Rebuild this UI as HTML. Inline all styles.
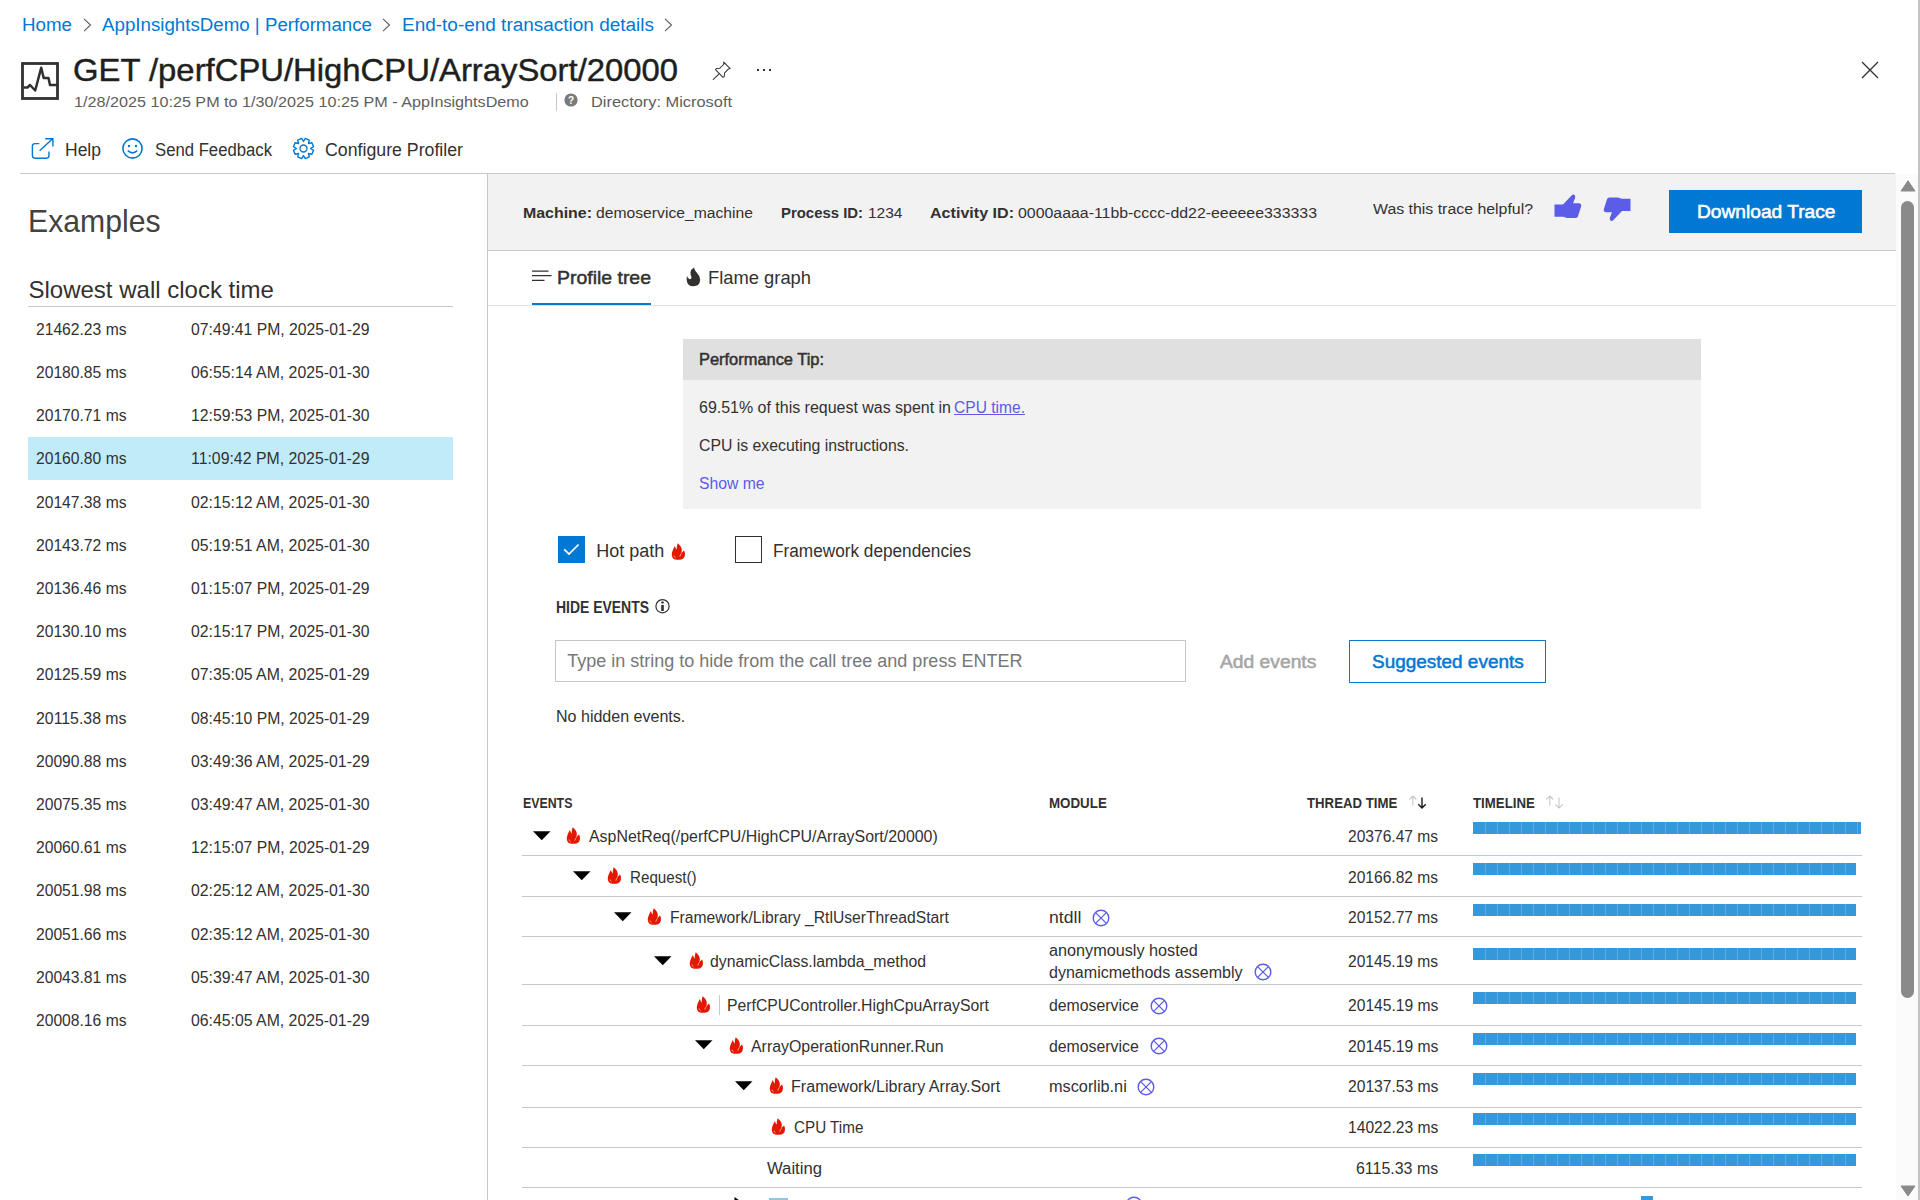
<!DOCTYPE html>
<html><head><meta charset="utf-8"><style>
html,body{margin:0;padding:0;width:1920px;height:1200px;overflow:hidden;background:#fff;}
body{position:relative;font-family:"Liberation Sans", sans-serif;}
.t{position:absolute;white-space:nowrap;transform-origin:0 50%;}
.a{position:absolute;}
</style></head><body>
<div class="a" style="left:1918px;top:0;width:2px;height:1200px;background:#c4c4c4"></div>
<svg class="a" style="left:83px;top:18px" width="9" height="14" viewBox="0 0 9 14"><polyline points="1,0.8 7.5,7 1,13.2" fill="none" stroke="#605e5c" stroke-width="1.1"/></svg>
<svg class="a" style="left:381.5px;top:18px" width="9" height="14" viewBox="0 0 9 14"><polyline points="1,0.8 7.5,7 1,13.2" fill="none" stroke="#605e5c" stroke-width="1.1"/></svg>
<svg class="a" style="left:664px;top:18px" width="9" height="14" viewBox="0 0 9 14"><polyline points="1,0.8 7.5,7 1,13.2" fill="none" stroke="#605e5c" stroke-width="1.1"/></svg>
<svg class="a" style="left:20px;top:61px" width="40" height="40" viewBox="0 0 40 40"><rect x="2.5" y="2.5" width="35" height="35" fill="none" stroke="#323130" stroke-width="2.8"/><polyline points="3.5,26.5 7.5,26.5 10,24 15.2,29.5 21.2,6.8 23.7,17 28.5,17 30,24 37,24" fill="none" stroke="#323130" stroke-width="2.5" stroke-linejoin="round"/></svg>
<svg class="a" style="left:711.5px;top:60.5px" width="19.5" height="19.5" viewBox="0 0 21 21"><path d="M12.6,1.2 L19.6,8.2 L17.8,8.6 L13.6,12.8 L13.2,16.6 L11.9,17.6 L3.7,9.4 L4.7,8.1 L8.5,7.7 L12.7,3.5 Z" fill="none" stroke="#323130" stroke-width="1.1" stroke-linejoin="round"/><line x1="7.8" y1="13.5" x2="1" y2="20.3" stroke="#323130" stroke-width="1.1"/></svg>
<div class="a" style="left:757.3px;top:69px;width:2.2px;height:2.2px;background:#323130"></div>
<div class="a" style="left:763px;top:69px;width:2.2px;height:2.2px;background:#323130"></div>
<div class="a" style="left:768.8px;top:69px;width:2.2px;height:2.2px;background:#323130"></div>
<div class="a" style="left:556px;top:92.5px;width:1px;height:18px;background:#c8c6c4"></div>
<svg class="a" style="left:563.5px;top:93.3px" width="14" height="14" viewBox="0 0 14 14"><circle cx="7" cy="7" r="6.6" fill="#7a7a7a"/><text x="7" y="10.6" text-anchor="middle" font-family="Liberation Sans" font-weight="700" font-size="10" fill="#fff">?</text></svg>
<svg class="a" style="left:1861px;top:61px" width="18" height="18" viewBox="0 0 18 18"><path d="M1,1 L17,17 M17,1 L1,17" stroke="#323130" stroke-width="1.3"/></svg>
<svg class="a" style="left:31px;top:137px" width="24" height="23" viewBox="0 0 24 23"><path d="M8.3,6.6 L4,6.6 Q1.4,6.6 1.4,9.2 L1.4,18.6 Q1.4,21.2 4,21.2 L15.4,21.2 Q18,21.2 18,18.6 L18,14.6" fill="none" stroke="#0078d4" stroke-width="1.4"/><path d="M8.6,13.8 L21.6,1.8 M14.2,1.8 L21.9,1.8 L21.9,9.4" fill="none" stroke="#0078d4" stroke-width="1.4"/></svg>
<svg class="a" style="left:121px;top:137px" width="23" height="23" viewBox="0 0 23 23"><circle cx="11.5" cy="11.5" r="9.6" fill="none" stroke="#0078d4" stroke-width="1.6"/><circle cx="8" cy="9" r="1.2" fill="#0078d4"/><circle cx="15" cy="9" r="1.2" fill="#0078d4"/><path d="M6.8,13.6 Q11.5,18 16.2,13.6" fill="none" stroke="#0078d4" stroke-width="1.6"/></svg>
<svg class="a" style="left:292.1px;top:137px" width="23" height="23" viewBox="0 0 22.5 22.5"><polygon points="21.08,13.07 19.49,16.92 16.13,16.13 16.92,19.49 13.07,21.08 11.25,18.15 9.43,21.08 5.58,19.49 6.37,16.13 3.01,16.92 1.42,13.07 4.35,11.25 1.42,9.43 3.01,5.58 6.37,6.37 5.58,3.01 9.43,1.42 11.25,4.35 13.07,1.42 16.92,3.01 16.13,6.37 19.49,5.58 21.08,9.43 18.15,11.25" fill="none" stroke="#0078d4" stroke-width="1.35" stroke-linejoin="round"/><circle cx="11.25" cy="11.25" r="3.4" fill="none" stroke="#0078d4" stroke-width="1.35"/></svg>
<div class="a" style="left:20px;top:173px;width:1875px;height:1px;background:#c8c8c8"></div>
<div class="a" style="left:487px;top:173px;width:1px;height:1027px;background:#c8c8c8"></div>
<div class="a" style="left:28px;top:306px;width:425px;height:1px;background:#c8c8c8"></div>
<div class="a" style="left:28px;top:437px;width:425px;height:43px;background:#c0ecfa"></div>
<div class="a" style="left:488px;top:174px;width:1408px;height:76px;background:#f2f2f2"></div>
<div class="a" style="left:488px;top:250px;width:1408px;height:1px;background:#c8c8c8"></div>
<svg class="a" style="left:1554px;top:193.5px" width="28" height="25" viewBox="0 0 28 25"><path d="M0.5,10.5 L9,10.5 L17.8,1.2 Q19.3,-0.3 20.8,1.3 Q21.6,2.5 21,4.2 L19,9.3 L25.3,9.3 Q27.6,9.6 27.2,12.2 L24,22.3 Q23.4,23.9 21.6,23.9 L13,23.9 L9.3,22.8 L0.5,22.8 Z" fill="#5b5ce8"/></svg>
<svg class="a" style="left:1603px;top:197px" width="28" height="25" viewBox="0 0 28 25"><path d="M0.5,10.5 L9,10.5 L17.8,1.2 Q19.3,-0.3 20.8,1.3 Q21.6,2.5 21,4.2 L19,9.3 L25.3,9.3 Q27.6,9.6 27.2,12.2 L24,22.3 Q23.4,23.9 21.6,23.9 L13,23.9 L9.3,22.8 L0.5,22.8 Z" fill="#5b5ce8" transform="rotate(180 14 12.25)"/></svg>
<div class="a" style="left:1669px;top:190px;width:193px;height:43px;background:#0078d4"></div>
<svg class="a" style="left:532px;top:269px" width="20" height="14" viewBox="0 0 20 14"><path d="M0,2.1 H16.5 M0,6.7 H19.5 M0,11.3 H12.5" stroke="#323130" stroke-width="1.3"/></svg>
<svg class="a" style="left:686px;top:266.5px" width="15" height="20" viewBox="0 0 15 20"><path d="M8,0.5 Q5,2 4.5,5.5 Q4.3,8 5.5,10 Q5.5,12.3 3.8,12.3 Q2,12.3 1,9 Q0.5,10.5 0.7,13 Q1.3,19.3 7.3,19.3 Q13.8,19.3 14.2,12.8 Q14.2,9 11,6 Q8.3,3.5 8,0.5 Z" fill="#323130"/></svg>
<div class="a" style="left:532px;top:303px;width:119px;height:2px;background:#0078d4"></div>
<div class="a" style="left:488px;top:305px;width:1408px;height:1px;background:#e1e1e1"></div>
<div class="a" style="left:683px;top:339px;width:1018px;height:41px;background:#e0e0e0"></div>
<div class="a" style="left:683px;top:380px;width:1018px;height:129px;background:#f2f2f2"></div>
<svg class="a" style="left:558px;top:536px" width="27" height="27" viewBox="0 0 27 27"><rect width="27" height="27" fill="#0078d4"/><polyline points="6.2,13.3 11,18 20.6,8.5" fill="none" stroke="#fff" stroke-width="1.7"/></svg>
<div class="a" style="left:735px;top:536px;width:25px;height:25px;border:1px solid #323130"></div>
<svg class="a" style="left:671px;top:542.5px" width="16" height="18" viewBox="0 0 16 18"><g transform="translate(-0.3,-0.4)"><path d="M7,17.2 C4.5,17.2 2.8,16.6 1.8,14.8 C0.8,13 0.9,10.5 1.8,8.3 C2.4,6.6 3.4,5 4.2,3.5 C4.6,4.8 5,5.8 5.9,7.2 C5.9,4.8 6.3,2.6 7,0.7 C8.8,2.2 10.6,4 11,6.4 C11.3,8 11,9.2 10.6,10.3 C11.6,9.6 12.6,8.8 13.3,7.9 C14.3,9.6 14.6,11.8 14,13.6 C13.3,15.8 11.5,17.2 9,17.2 Z" fill="#e31800"/><path d="M3.2,12.9 Q3.7,14.5 5,15.4" stroke="#f2a196" stroke-width="1" fill="none"/><path d="M9.2,14 Q9.3,12 10.9,10.6" stroke="#f2a196" stroke-width="1" fill="none"/></g></svg>
<svg class="a" style="left:655px;top:599px" width="15" height="15" viewBox="0 0 15 15"><circle cx="7.5" cy="7.2" r="6.6" fill="none" stroke="#323130" stroke-width="1.2"/><rect x="6.1" y="2.4" width="2.8" height="2.2" rx="1" fill="#323130"/><rect x="6.2" y="5.9" width="2.6" height="6.1" fill="#323130"/></svg>
<div class="a" style="left:555px;top:640px;width:629px;height:40px;border:1px solid #c6c6c6;background:#fff"></div>
<div class="a" style="left:1349px;top:640px;width:195px;height:41px;border:1px solid #0078d4"></div>
<svg class="a" style="left:1408px;top:795px" width="20" height="15" viewBox="0 0 20 15"><path d="M4.8,10.5 V1 M1.3,4.5 L4.8,1 L8.3,4.5" fill="none" stroke="#c8c8c8" stroke-width="1.1"/><path d="M14,2.5 V13 M10.3,9.3 L14,13 L17.7,9.3" fill="none" stroke="#1b1a19" stroke-width="1.4"/></svg>
<svg class="a" style="left:1545px;top:795px" width="20" height="15" viewBox="0 0 20 15"><path d="M4.8,10.5 V1 M1.3,4.5 L4.8,1 L8.3,4.5" fill="none" stroke="#c8c8c8" stroke-width="1.1"/><path d="M14,2.5 V13 M10.3,9.3 L14,13 L17.7,9.3" fill="none" stroke="#c8c8c8" stroke-width="1.1"/></svg>
<svg class="a" style="left:533.3px;top:830.6px" width="18" height="10" viewBox="0 0 18 10"><polygon points="0,0.3 17.5,0.3 8.75,9.3" fill="#000"/></svg>
<svg class="a" style="left:565.7px;top:826.6999999999999px" width="16" height="18" viewBox="0 0 16 18"><g transform="translate(-0.3,-0.4)"><path d="M7,17.2 C4.5,17.2 2.8,16.6 1.8,14.8 C0.8,13 0.9,10.5 1.8,8.3 C2.4,6.6 3.4,5 4.2,3.5 C4.6,4.8 5,5.8 5.9,7.2 C5.9,4.8 6.3,2.6 7,0.7 C8.8,2.2 10.6,4 11,6.4 C11.3,8 11,9.2 10.6,10.3 C11.6,9.6 12.6,8.8 13.3,7.9 C14.3,9.6 14.6,11.8 14,13.6 C13.3,15.8 11.5,17.2 9,17.2 Z" fill="#e31800"/><path d="M3.2,12.9 Q3.7,14.5 5,15.4" stroke="#f2a196" stroke-width="1" fill="none"/><path d="M9.2,14 Q9.3,12 10.9,10.6" stroke="#f2a196" stroke-width="1" fill="none"/></g></svg>
<div class="a" style="left:1473px;top:821.6px;width:387.8px;height:12px;background:#3498db;background-image:repeating-linear-gradient(90deg,#3498db 0,#3498db 11px,#5eace4 11px,#5eace4 12px);background-position:1px 0"></div>
<div class="a" style="left:522px;top:855.4px;width:1340px;height:1px;background:#c8c8c8"></div>
<svg class="a" style="left:573.3px;top:871.3px" width="18" height="10" viewBox="0 0 18 10"><polygon points="0,0.3 17.5,0.3 8.75,9.3" fill="#000"/></svg>
<svg class="a" style="left:607px;top:867.4px" width="16" height="18" viewBox="0 0 16 18"><g transform="translate(-0.3,-0.4)"><path d="M7,17.2 C4.5,17.2 2.8,16.6 1.8,14.8 C0.8,13 0.9,10.5 1.8,8.3 C2.4,6.6 3.4,5 4.2,3.5 C4.6,4.8 5,5.8 5.9,7.2 C5.9,4.8 6.3,2.6 7,0.7 C8.8,2.2 10.6,4 11,6.4 C11.3,8 11,9.2 10.6,10.3 C11.6,9.6 12.6,8.8 13.3,7.9 C14.3,9.6 14.6,11.8 14,13.6 C13.3,15.8 11.5,17.2 9,17.2 Z" fill="#e31800"/><path d="M3.2,12.9 Q3.7,14.5 5,15.4" stroke="#f2a196" stroke-width="1" fill="none"/><path d="M9.2,14 Q9.3,12 10.9,10.6" stroke="#f2a196" stroke-width="1" fill="none"/></g></svg>
<div class="a" style="left:1473px;top:862.8px;width:383.2px;height:12px;background:#3498db;background-image:repeating-linear-gradient(90deg,#3498db 0,#3498db 11px,#5eace4 11px,#5eace4 12px);background-position:1px 0"></div>
<div class="a" style="left:522px;top:896.1px;width:1340px;height:1px;background:#c8c8c8"></div>
<svg class="a" style="left:614px;top:911.6px" width="18" height="10" viewBox="0 0 18 10"><polygon points="0,0.3 17.5,0.3 8.75,9.3" fill="#000"/></svg>
<svg class="a" style="left:647px;top:907.6999999999999px" width="16" height="18" viewBox="0 0 16 18"><g transform="translate(-0.3,-0.4)"><path d="M7,17.2 C4.5,17.2 2.8,16.6 1.8,14.8 C0.8,13 0.9,10.5 1.8,8.3 C2.4,6.6 3.4,5 4.2,3.5 C4.6,4.8 5,5.8 5.9,7.2 C5.9,4.8 6.3,2.6 7,0.7 C8.8,2.2 10.6,4 11,6.4 C11.3,8 11,9.2 10.6,10.3 C11.6,9.6 12.6,8.8 13.3,7.9 C14.3,9.6 14.6,11.8 14,13.6 C13.3,15.8 11.5,17.2 9,17.2 Z" fill="#e31800"/><path d="M3.2,12.9 Q3.7,14.5 5,15.4" stroke="#f2a196" stroke-width="1" fill="none"/><path d="M9.2,14 Q9.3,12 10.9,10.6" stroke="#f2a196" stroke-width="1" fill="none"/></g></svg>
<svg class="a" style="left:1092.4px;top:908.6px" width="18" height="18" viewBox="0 0 18 18"><circle cx="9" cy="9" r="7.8" fill="none" stroke="#5b5ce8" stroke-width="1.4"/><path d="M3.6,3.6 L14.4,14.4 M14.4,3.6 L3.6,14.4" stroke="#5b5ce8" stroke-width="1.3"/></svg>
<div class="a" style="left:1473px;top:904.0px;width:383.2px;height:12px;background:#3498db;background-image:repeating-linear-gradient(90deg,#3498db 0,#3498db 11px,#5eace4 11px,#5eace4 12px);background-position:1px 0"></div>
<div class="a" style="left:522px;top:936.1px;width:1340px;height:1px;background:#c8c8c8"></div>
<svg class="a" style="left:654px;top:955.7px" width="18" height="10" viewBox="0 0 18 10"><polygon points="0,0.3 17.5,0.3 8.75,9.3" fill="#000"/></svg>
<svg class="a" style="left:688.6px;top:951.8px" width="16" height="18" viewBox="0 0 16 18"><g transform="translate(-0.3,-0.4)"><path d="M7,17.2 C4.5,17.2 2.8,16.6 1.8,14.8 C0.8,13 0.9,10.5 1.8,8.3 C2.4,6.6 3.4,5 4.2,3.5 C4.6,4.8 5,5.8 5.9,7.2 C5.9,4.8 6.3,2.6 7,0.7 C8.8,2.2 10.6,4 11,6.4 C11.3,8 11,9.2 10.6,10.3 C11.6,9.6 12.6,8.8 13.3,7.9 C14.3,9.6 14.6,11.8 14,13.6 C13.3,15.8 11.5,17.2 9,17.2 Z" fill="#e31800"/><path d="M3.2,12.9 Q3.7,14.5 5,15.4" stroke="#f2a196" stroke-width="1" fill="none"/><path d="M9.2,14 Q9.3,12 10.9,10.6" stroke="#f2a196" stroke-width="1" fill="none"/></g></svg>
<svg class="a" style="left:1253.6px;top:962.5px" width="18" height="18" viewBox="0 0 18 18"><circle cx="9" cy="9" r="7.8" fill="none" stroke="#5b5ce8" stroke-width="1.4"/><path d="M3.6,3.6 L14.4,14.4 M14.4,3.6 L3.6,14.4" stroke="#5b5ce8" stroke-width="1.3"/></svg>
<div class="a" style="left:1473px;top:948.0px;width:383.2px;height:12px;background:#3498db;background-image:repeating-linear-gradient(90deg,#3498db 0,#3498db 11px,#5eace4 11px,#5eace4 12px);background-position:1px 0"></div>
<div class="a" style="left:522px;top:984.4px;width:1340px;height:1px;background:#c8c8c8"></div>
<svg class="a" style="left:696.2px;top:995.8px" width="16" height="18" viewBox="0 0 16 18"><g transform="translate(-0.3,-0.4)"><path d="M7,17.2 C4.5,17.2 2.8,16.6 1.8,14.8 C0.8,13 0.9,10.5 1.8,8.3 C2.4,6.6 3.4,5 4.2,3.5 C4.6,4.8 5,5.8 5.9,7.2 C5.9,4.8 6.3,2.6 7,0.7 C8.8,2.2 10.6,4 11,6.4 C11.3,8 11,9.2 10.6,10.3 C11.6,9.6 12.6,8.8 13.3,7.9 C14.3,9.6 14.6,11.8 14,13.6 C13.3,15.8 11.5,17.2 9,17.2 Z" fill="#e31800"/><path d="M3.2,12.9 Q3.7,14.5 5,15.4" stroke="#f2a196" stroke-width="1" fill="none"/><path d="M9.2,14 Q9.3,12 10.9,10.6" stroke="#f2a196" stroke-width="1" fill="none"/></g></svg>
<svg class="a" style="left:1150px;top:996.7px" width="18" height="18" viewBox="0 0 18 18"><circle cx="9" cy="9" r="7.8" fill="none" stroke="#5b5ce8" stroke-width="1.4"/><path d="M3.6,3.6 L14.4,14.4 M14.4,3.6 L3.6,14.4" stroke="#5b5ce8" stroke-width="1.3"/></svg>
<div class="a" style="left:1473px;top:992.4px;width:383.2px;height:12px;background:#3498db;background-image:repeating-linear-gradient(90deg,#3498db 0,#3498db 11px,#5eace4 11px,#5eace4 12px);background-position:1px 0"></div>
<div class="a" style="left:522px;top:1025.0px;width:1340px;height:1px;background:#c8c8c8"></div>
<svg class="a" style="left:695px;top:1040.4px" width="18" height="10" viewBox="0 0 18 10"><polygon points="0,0.3 17.5,0.3 8.75,9.3" fill="#000"/></svg>
<svg class="a" style="left:728.8px;top:1036.5px" width="16" height="18" viewBox="0 0 16 18"><g transform="translate(-0.3,-0.4)"><path d="M7,17.2 C4.5,17.2 2.8,16.6 1.8,14.8 C0.8,13 0.9,10.5 1.8,8.3 C2.4,6.6 3.4,5 4.2,3.5 C4.6,4.8 5,5.8 5.9,7.2 C5.9,4.8 6.3,2.6 7,0.7 C8.8,2.2 10.6,4 11,6.4 C11.3,8 11,9.2 10.6,10.3 C11.6,9.6 12.6,8.8 13.3,7.9 C14.3,9.6 14.6,11.8 14,13.6 C13.3,15.8 11.5,17.2 9,17.2 Z" fill="#e31800"/><path d="M3.2,12.9 Q3.7,14.5 5,15.4" stroke="#f2a196" stroke-width="1" fill="none"/><path d="M9.2,14 Q9.3,12 10.9,10.6" stroke="#f2a196" stroke-width="1" fill="none"/></g></svg>
<svg class="a" style="left:1150px;top:1037.4px" width="18" height="18" viewBox="0 0 18 18"><circle cx="9" cy="9" r="7.8" fill="none" stroke="#5b5ce8" stroke-width="1.4"/><path d="M3.6,3.6 L14.4,14.4 M14.4,3.6 L3.6,14.4" stroke="#5b5ce8" stroke-width="1.3"/></svg>
<div class="a" style="left:1473px;top:1032.6px;width:383.2px;height:12px;background:#3498db;background-image:repeating-linear-gradient(90deg,#3498db 0,#3498db 11px,#5eace4 11px,#5eace4 12px);background-position:1px 0"></div>
<div class="a" style="left:522px;top:1065.2px;width:1340px;height:1px;background:#c8c8c8"></div>
<svg class="a" style="left:735px;top:1080.7px" width="18" height="10" viewBox="0 0 18 10"><polygon points="0,0.3 17.5,0.3 8.75,9.3" fill="#000"/></svg>
<svg class="a" style="left:769.3px;top:1076.8px" width="16" height="18" viewBox="0 0 16 18"><g transform="translate(-0.3,-0.4)"><path d="M7,17.2 C4.5,17.2 2.8,16.6 1.8,14.8 C0.8,13 0.9,10.5 1.8,8.3 C2.4,6.6 3.4,5 4.2,3.5 C4.6,4.8 5,5.8 5.9,7.2 C5.9,4.8 6.3,2.6 7,0.7 C8.8,2.2 10.6,4 11,6.4 C11.3,8 11,9.2 10.6,10.3 C11.6,9.6 12.6,8.8 13.3,7.9 C14.3,9.6 14.6,11.8 14,13.6 C13.3,15.8 11.5,17.2 9,17.2 Z" fill="#e31800"/><path d="M3.2,12.9 Q3.7,14.5 5,15.4" stroke="#f2a196" stroke-width="1" fill="none"/><path d="M9.2,14 Q9.3,12 10.9,10.6" stroke="#f2a196" stroke-width="1" fill="none"/></g></svg>
<svg class="a" style="left:1137px;top:1077.7px" width="18" height="18" viewBox="0 0 18 18"><circle cx="9" cy="9" r="7.8" fill="none" stroke="#5b5ce8" stroke-width="1.4"/><path d="M3.6,3.6 L14.4,14.4 M14.4,3.6 L3.6,14.4" stroke="#5b5ce8" stroke-width="1.3"/></svg>
<div class="a" style="left:1473px;top:1073.0px;width:383.2px;height:12px;background:#3498db;background-image:repeating-linear-gradient(90deg,#3498db 0,#3498db 11px,#5eace4 11px,#5eace4 12px);background-position:1px 0"></div>
<div class="a" style="left:522px;top:1106.5px;width:1340px;height:1px;background:#c8c8c8"></div>
<svg class="a" style="left:771px;top:1117.5px" width="16" height="18" viewBox="0 0 16 18"><g transform="translate(-0.3,-0.4)"><path d="M7,17.2 C4.5,17.2 2.8,16.6 1.8,14.8 C0.8,13 0.9,10.5 1.8,8.3 C2.4,6.6 3.4,5 4.2,3.5 C4.6,4.8 5,5.8 5.9,7.2 C5.9,4.8 6.3,2.6 7,0.7 C8.8,2.2 10.6,4 11,6.4 C11.3,8 11,9.2 10.6,10.3 C11.6,9.6 12.6,8.8 13.3,7.9 C14.3,9.6 14.6,11.8 14,13.6 C13.3,15.8 11.5,17.2 9,17.2 Z" fill="#e31800"/><path d="M3.2,12.9 Q3.7,14.5 5,15.4" stroke="#f2a196" stroke-width="1" fill="none"/><path d="M9.2,14 Q9.3,12 10.9,10.6" stroke="#f2a196" stroke-width="1" fill="none"/></g></svg>
<div class="a" style="left:1473px;top:1113.4px;width:383.2px;height:12px;background:#3498db;background-image:repeating-linear-gradient(90deg,#3498db 0,#3498db 11px,#5eace4 11px,#5eace4 12px);background-position:1px 0"></div>
<div class="a" style="left:522px;top:1146.5px;width:1340px;height:1px;background:#c8c8c8"></div>
<div class="a" style="left:1473px;top:1153.5px;width:383.2px;height:12px;background:#3498db;background-image:repeating-linear-gradient(90deg,#3498db 0,#3498db 11px,#5eace4 11px,#5eace4 12px);background-position:1px 0"></div>
<div class="a" style="left:522px;top:1187.3px;width:1340px;height:1px;background:#c8c8c8"></div>
<div class="a" style="left:719px;top:994.5px;width:1px;height:20.5px;background:#c8c8c8"></div>
<svg class="a" style="left:734px;top:1197px" width="10" height="10" viewBox="0 0 10 10"><polygon points="0.5,0 9,6 0.5,12" fill="#000"/></svg>
<div class="a" style="left:769px;top:1198px;width:19px;height:3px;background:#8ec5ea"></div>
<svg class="a" style="left:1125px;top:1196px" width="18" height="18" viewBox="0 0 18 18"><circle cx="9" cy="9" r="7.8" fill="none" stroke="#5b5ce8" stroke-width="1.4"/></svg>
<div class="a" style="left:1641px;top:1196px;width:12px;height:5px;background:#3498db"></div>
<div class="a" style="left:1896px;top:174px;width:22px;height:1026px;background:#fbfbfb"></div>
<svg class="a" style="left:1899.5px;top:180px" width="16" height="12" viewBox="0 0 16 12"><polygon points="8,0.8 15,11 1,11" fill="#8a8a8a" stroke="#8a8a8a" stroke-width="1" stroke-linejoin="round"/></svg>
<div class="a" style="left:1901px;top:201px;width:13px;height:797px;background:#8a8a8a;border-radius:6.5px"></div>
<svg class="a" style="left:1899.5px;top:1185px" width="16" height="12" viewBox="0 0 16 12"><polygon points="1,1 15,1 8,11" fill="#8a8a8a" stroke="#8a8a8a" stroke-width="1" stroke-linejoin="round"/></svg>
<div class="t" id="t0" style="left:21.50px;top:15.76px;font-size:18px;line-height:18px;font-weight:400;color:#0078d4;transform:scaleX(1.0413);">Home</div>
<div class="t" id="t1" style="left:101.50px;top:15.76px;font-size:18px;line-height:18px;font-weight:400;color:#0078d4;transform:scaleX(1.0393);">AppInsightsDemo | Performance</div>
<div class="t" id="t2" style="left:401.50px;top:15.76px;font-size:18px;line-height:18px;font-weight:400;color:#0078d4;transform:scaleX(1.0537);">End-to-end transaction details</div>
<div class="t" id="t3" style="left:72.50px;top:53.91px;font-size:32px;line-height:32px;font-weight:400;color:#201f1e;transform:scaleX(1.0257);-webkit-text-stroke:0.45px #201f1e;">GET /perfCPU/HighCPU/ArraySort/20000</div>
<div class="t" id="t4" style="left:73.50px;top:94.35px;font-size:15.3px;line-height:15.3px;font-weight:400;color:#605e5c;transform:scaleX(1.0569);">1/28/2025 10:25 PM to 1/30/2025 10:25 PM - AppInsightsDemo</div>
<div class="t" id="t5" style="left:590.90px;top:94.15px;font-size:15.3px;line-height:15.3px;font-weight:400;color:#605e5c;transform:scaleX(1.0702);">Directory: Microsoft</div>
<div class="t" id="t6" style="left:64.50px;top:140.76px;font-size:18px;line-height:18px;font-weight:400;color:#323130;transform:scaleX(0.9722);">Help</div>
<div class="t" id="t7" style="left:154.50px;top:140.76px;font-size:18px;line-height:18px;font-weight:400;color:#323130;transform:scaleX(0.9279);">Send Feedback</div>
<div class="t" id="t8" style="left:324.50px;top:140.76px;font-size:18px;line-height:18px;font-weight:400;color:#323130;transform:scaleX(0.9853);">Configure Profiler</div>
<div class="t" id="t9" style="left:27.70px;top:204.51px;font-size:32px;line-height:32px;font-weight:400;color:#43423f;transform:scaleX(0.9431);">Examples</div>
<div class="t" id="t10" style="left:28.50px;top:277.68px;font-size:24px;line-height:24px;font-weight:400;color:#323130;">Slowest wall clock time</div>
<div class="t" id="t11" style="left:35.50px;top:321.86px;font-size:16px;line-height:16px;font-weight:400;color:#323130;transform:scaleX(0.9782);">21462.23 ms</div>
<div class="t" id="t12" style="left:190.50px;top:321.86px;font-size:16px;line-height:16px;font-weight:400;color:#323130;transform:scaleX(0.9836);">07:49:41 PM, 2025-01-29</div>
<div class="t" id="t13" style="left:35.50px;top:365.05px;font-size:16px;line-height:16px;font-weight:400;color:#323130;transform:scaleX(0.9782);">20180.85 ms</div>
<div class="t" id="t14" style="left:190.50px;top:365.05px;font-size:16px;line-height:16px;font-weight:400;color:#323130;transform:scaleX(0.9885);">06:55:14 AM, 2025-01-30</div>
<div class="t" id="t15" style="left:35.50px;top:408.24px;font-size:16px;line-height:16px;font-weight:400;color:#323130;transform:scaleX(0.9782);">20170.71 ms</div>
<div class="t" id="t16" style="left:190.50px;top:408.24px;font-size:16px;line-height:16px;font-weight:400;color:#323130;transform:scaleX(0.9836);">12:59:53 PM, 2025-01-30</div>
<div class="t" id="t17" style="left:35.50px;top:451.43px;font-size:16px;line-height:16px;font-weight:400;color:#323130;transform:scaleX(0.9782);">20160.80 ms</div>
<div class="t" id="t18" style="left:190.50px;top:451.43px;font-size:16px;line-height:16px;font-weight:400;color:#323130;transform:scaleX(0.9901);">11:09:42 PM, 2025-01-29</div>
<div class="t" id="t19" style="left:35.50px;top:494.62px;font-size:16px;line-height:16px;font-weight:400;color:#323130;transform:scaleX(0.9782);">20147.38 ms</div>
<div class="t" id="t20" style="left:190.50px;top:494.62px;font-size:16px;line-height:16px;font-weight:400;color:#323130;transform:scaleX(0.9885);">02:15:12 AM, 2025-01-30</div>
<div class="t" id="t21" style="left:35.50px;top:537.81px;font-size:16px;line-height:16px;font-weight:400;color:#323130;transform:scaleX(0.9782);">20143.72 ms</div>
<div class="t" id="t22" style="left:190.50px;top:537.81px;font-size:16px;line-height:16px;font-weight:400;color:#323130;transform:scaleX(0.9885);">05:19:51 AM, 2025-01-30</div>
<div class="t" id="t23" style="left:35.50px;top:581.00px;font-size:16px;line-height:16px;font-weight:400;color:#323130;transform:scaleX(0.9782);">20136.46 ms</div>
<div class="t" id="t24" style="left:190.50px;top:581.00px;font-size:16px;line-height:16px;font-weight:400;color:#323130;transform:scaleX(0.9836);">01:15:07 PM, 2025-01-29</div>
<div class="t" id="t25" style="left:35.50px;top:624.19px;font-size:16px;line-height:16px;font-weight:400;color:#323130;transform:scaleX(0.9782);">20130.10 ms</div>
<div class="t" id="t26" style="left:190.50px;top:624.19px;font-size:16px;line-height:16px;font-weight:400;color:#323130;transform:scaleX(0.9836);">02:15:17 PM, 2025-01-30</div>
<div class="t" id="t27" style="left:35.50px;top:667.38px;font-size:16px;line-height:16px;font-weight:400;color:#323130;transform:scaleX(0.9782);">20125.59 ms</div>
<div class="t" id="t28" style="left:190.50px;top:667.38px;font-size:16px;line-height:16px;font-weight:400;color:#323130;transform:scaleX(0.9885);">07:35:05 AM, 2025-01-29</div>
<div class="t" id="t29" style="left:35.50px;top:710.57px;font-size:16px;line-height:16px;font-weight:400;color:#323130;transform:scaleX(0.9909);">20115.38 ms</div>
<div class="t" id="t30" style="left:190.50px;top:710.57px;font-size:16px;line-height:16px;font-weight:400;color:#323130;transform:scaleX(0.9836);">08:45:10 PM, 2025-01-29</div>
<div class="t" id="t31" style="left:35.50px;top:753.76px;font-size:16px;line-height:16px;font-weight:400;color:#323130;transform:scaleX(0.9782);">20090.88 ms</div>
<div class="t" id="t32" style="left:190.50px;top:753.76px;font-size:16px;line-height:16px;font-weight:400;color:#323130;transform:scaleX(0.9885);">03:49:36 AM, 2025-01-29</div>
<div class="t" id="t33" style="left:35.50px;top:796.95px;font-size:16px;line-height:16px;font-weight:400;color:#323130;transform:scaleX(0.9782);">20075.35 ms</div>
<div class="t" id="t34" style="left:190.50px;top:796.95px;font-size:16px;line-height:16px;font-weight:400;color:#323130;transform:scaleX(0.9885);">03:49:47 AM, 2025-01-30</div>
<div class="t" id="t35" style="left:35.50px;top:840.14px;font-size:16px;line-height:16px;font-weight:400;color:#323130;transform:scaleX(0.9782);">20060.61 ms</div>
<div class="t" id="t36" style="left:190.50px;top:840.14px;font-size:16px;line-height:16px;font-weight:400;color:#323130;transform:scaleX(0.9836);">12:15:07 PM, 2025-01-29</div>
<div class="t" id="t37" style="left:35.50px;top:883.33px;font-size:16px;line-height:16px;font-weight:400;color:#323130;transform:scaleX(0.9782);">20051.98 ms</div>
<div class="t" id="t38" style="left:190.50px;top:883.33px;font-size:16px;line-height:16px;font-weight:400;color:#323130;transform:scaleX(0.9885);">02:25:12 AM, 2025-01-30</div>
<div class="t" id="t39" style="left:35.50px;top:926.52px;font-size:16px;line-height:16px;font-weight:400;color:#323130;transform:scaleX(0.9782);">20051.66 ms</div>
<div class="t" id="t40" style="left:190.50px;top:926.52px;font-size:16px;line-height:16px;font-weight:400;color:#323130;transform:scaleX(0.9885);">02:35:12 AM, 2025-01-30</div>
<div class="t" id="t41" style="left:35.50px;top:969.71px;font-size:16px;line-height:16px;font-weight:400;color:#323130;transform:scaleX(0.9782);">20043.81 ms</div>
<div class="t" id="t42" style="left:190.50px;top:969.71px;font-size:16px;line-height:16px;font-weight:400;color:#323130;transform:scaleX(0.9885);">05:39:47 AM, 2025-01-30</div>
<div class="t" id="t43" style="left:35.50px;top:1012.90px;font-size:16px;line-height:16px;font-weight:400;color:#323130;transform:scaleX(0.9782);">20008.16 ms</div>
<div class="t" id="t44" style="left:190.50px;top:1012.90px;font-size:16px;line-height:16px;font-weight:400;color:#323130;transform:scaleX(0.9885);">06:45:05 AM, 2025-01-29</div>
<div class="t" id="t45" style="left:522.50px;top:205.05px;font-size:15.3px;line-height:15.3px;font-weight:700;color:#323130;transform:scaleX(1.0408);">Machine:</div>
<div class="t" id="t46" style="left:595.50px;top:205.05px;font-size:15.3px;line-height:15.3px;font-weight:400;color:#323130;transform:scaleX(1.0258);">demoservice_machine</div>
<div class="t" id="t47" style="left:780.50px;top:205.05px;font-size:15.3px;line-height:15.3px;font-weight:700;color:#323130;transform:scaleX(0.9742);">Process ID:</div>
<div class="t" id="t48" style="left:867.50px;top:205.05px;font-size:15.3px;line-height:15.3px;font-weight:400;color:#323130;transform:scaleX(1.0138);">1234</div>
<div class="t" id="t49" style="left:929.50px;top:205.35px;font-size:15.3px;line-height:15.3px;font-weight:700;color:#323130;transform:scaleX(1.0512);">Activity ID:</div>
<div class="t" id="t50" style="left:1018.00px;top:205.35px;font-size:15.3px;line-height:15.3px;font-weight:400;color:#323130;transform:scaleX(1.0380);">0000aaaa-11bb-cccc-dd22-eeeeee333333</div>
<div class="t" id="t51" style="left:1372.50px;top:201.38px;font-size:15.5px;line-height:15.5px;font-weight:400;color:#323130;transform:scaleX(1.0242);">Was this trace helpful?</div>
<div class="t" id="t52" style="left:1696.50px;top:202.76px;font-size:18px;line-height:18px;font-weight:400;color:#ffffff;transform:scaleX(1.0647);-webkit-text-stroke:0.55px #fff;">Download Trace</div>
<div class="t" id="t53" style="left:557.00px;top:267.92px;font-size:19px;line-height:19px;font-weight:400;color:#323130;transform:scaleX(1.0231);-webkit-text-stroke:0.5px #323130;">Profile tree</div>
<div class="t" id="t54" style="left:708.10px;top:267.92px;font-size:19px;line-height:19px;font-weight:400;color:#323130;transform:scaleX(0.9656);">Flame graph</div>
<div class="t" id="t55" style="left:698.80px;top:352.46px;font-size:16px;line-height:16px;font-weight:400;color:#323130;transform:scaleX(1.0260);-webkit-text-stroke:0.5px #323130;">Performance Tip:</div>
<div class="t" id="t56" style="left:698.80px;top:400.06px;font-size:16px;line-height:16px;font-weight:400;color:#323130;transform:scaleX(0.9976);">69.51% of this request was spent in</div>
<div class="t" id="t57" style="left:954.20px;top:400.06px;font-size:16px;line-height:16px;font-weight:400;color:#5b5ce6;transform:scaleX(0.9739);text-decoration:underline;">CPU time.</div>
<div class="t" id="t58" style="left:698.80px;top:438.16px;font-size:16px;line-height:16px;font-weight:400;color:#323130;transform:scaleX(0.9881);">CPU is executing instructions.</div>
<div class="t" id="t59" style="left:698.80px;top:476.06px;font-size:16px;line-height:16px;font-weight:400;color:#5b5ce6;transform:scaleX(0.9820);">Show me</div>
<div class="t" id="t60" style="left:596.20px;top:541.56px;font-size:18px;line-height:18px;font-weight:400;color:#323130;">Hot path</div>
<div class="t" id="t61" style="left:772.50px;top:541.66px;font-size:18px;line-height:18px;font-weight:400;color:#323130;transform:scaleX(0.9560);">Framework dependencies</div>
<div class="t" id="t62" style="left:555.80px;top:600.16px;font-size:16px;line-height:16px;font-weight:700;color:#323130;transform:scaleX(0.8717);">HIDE EVENTS</div>
<div class="t" id="t63" style="left:567.20px;top:651.76px;font-size:18px;line-height:18px;font-weight:400;color:#777777;">Type in string to hide from the call tree and press ENTER</div>
<div class="t" id="t64" style="left:1219.80px;top:653.26px;font-size:18px;line-height:18px;font-weight:400;color:#a6a6a6;transform:scaleX(1.0693);-webkit-text-stroke:0.55px #a6a6a6;">Add events</div>
<div class="t" id="t65" style="left:1371.50px;top:653.26px;font-size:18px;line-height:18px;font-weight:400;color:#0078d4;transform:scaleX(1.0527);-webkit-text-stroke:0.5px #0078d4;">Suggested events</div>
<div class="t" id="t66" style="left:555.80px;top:708.76px;font-size:16px;line-height:16px;font-weight:400;color:#323130;transform:scaleX(1.0024);">No hidden events.</div>
<div class="t" id="t67" style="left:523.00px;top:796.15px;font-size:14px;line-height:14px;font-weight:700;color:#323130;transform:scaleX(0.8819);">EVENTS</div>
<div class="t" id="t68" style="left:1048.50px;top:795.95px;font-size:14px;line-height:14px;font-weight:700;color:#323130;transform:scaleX(0.9527);">MODULE</div>
<div class="t" id="t69" style="left:1307.30px;top:796.15px;font-size:14px;line-height:14px;font-weight:700;color:#323130;transform:scaleX(0.9428);">THREAD TIME</div>
<div class="t" id="t70" style="left:1472.70px;top:796.15px;font-size:14px;line-height:14px;font-weight:700;color:#323130;transform:scaleX(0.9458);">TIMELINE</div>
<div class="t" id="t71" style="left:589.10px;top:829.16px;font-size:16px;line-height:16px;font-weight:400;color:#323130;transform:scaleX(0.9955);">AspNetReq(/perfCPU/HighCPU/ArraySort/20000)</div>
<div class="t" id="t72" style="left:1347.70px;top:829.16px;font-size:16px;line-height:16px;font-weight:400;color:#323130;transform:scaleX(0.9739);">20376.47 ms</div>
<div class="t" id="t73" style="left:629.50px;top:869.86px;font-size:16px;line-height:16px;font-weight:400;color:#323130;transform:scaleX(0.9480);">Request()</div>
<div class="t" id="t74" style="left:1347.70px;top:869.86px;font-size:16px;line-height:16px;font-weight:400;color:#323130;transform:scaleX(0.9739);">20166.82 ms</div>
<div class="t" id="t75" style="left:669.80px;top:910.16px;font-size:16px;line-height:16px;font-weight:400;color:#323130;transform:scaleX(0.9799);">Framework/Library _RtlUserThreadStart</div>
<div class="t" id="t76" style="left:1048.50px;top:910.16px;font-size:16px;line-height:16px;font-weight:400;color:#323130;transform:scaleX(1.1002);">ntdll</div>
<div class="t" id="t77" style="left:1347.70px;top:910.16px;font-size:16px;line-height:16px;font-weight:400;color:#323130;transform:scaleX(0.9739);">20152.77 ms</div>
<div class="t" id="t78" style="left:710.00px;top:954.26px;font-size:16px;line-height:16px;font-weight:400;color:#323130;transform:scaleX(0.9877);">dynamicClass.lambda_method</div>
<div class="t" id="t79" style="left:1048.50px;top:943.26px;font-size:16px;line-height:16px;font-weight:400;color:#323130;transform:scaleX(1.0132);">anonymously hosted</div>
<div class="t" id="t80" style="left:1048.50px;top:965.26px;font-size:16px;line-height:16px;font-weight:400;color:#323130;transform:scaleX(1.0028);">dynamicmethods assembly</div>
<div class="t" id="t81" style="left:1347.70px;top:954.26px;font-size:16px;line-height:16px;font-weight:400;color:#323130;transform:scaleX(0.9739);">20145.19 ms</div>
<div class="t" id="t82" style="left:726.60px;top:998.26px;font-size:16px;line-height:16px;font-weight:400;color:#323130;transform:scaleX(0.9850);">PerfCPUController.HighCpuArraySort</div>
<div class="t" id="t83" style="left:1048.50px;top:998.26px;font-size:16px;line-height:16px;font-weight:400;color:#323130;transform:scaleX(0.9889);">demoservice</div>
<div class="t" id="t84" style="left:1347.80px;top:998.26px;font-size:16px;line-height:16px;font-weight:400;color:#323130;transform:scaleX(0.9771);">20145.19 ms</div>
<div class="t" id="t85" style="left:750.80px;top:1038.96px;font-size:16px;line-height:16px;font-weight:400;color:#323130;transform:scaleX(0.9939);">ArrayOperationRunner.Run</div>
<div class="t" id="t86" style="left:1048.50px;top:1038.96px;font-size:16px;line-height:16px;font-weight:400;color:#323130;transform:scaleX(0.9889);">demoservice</div>
<div class="t" id="t87" style="left:1347.80px;top:1038.96px;font-size:16px;line-height:16px;font-weight:400;color:#323130;transform:scaleX(0.9771);">20145.19 ms</div>
<div class="t" id="t88" style="left:791.30px;top:1079.26px;font-size:16px;line-height:16px;font-weight:400;color:#323130;transform:scaleX(1.0065);">Framework/Library Array.Sort</div>
<div class="t" id="t89" style="left:1048.50px;top:1079.26px;font-size:16px;line-height:16px;font-weight:400;color:#323130;transform:scaleX(1.0174);">mscorlib.ni</div>
<div class="t" id="t90" style="left:1347.80px;top:1079.26px;font-size:16px;line-height:16px;font-weight:400;color:#323130;transform:scaleX(0.9771);">20137.53 ms</div>
<div class="t" id="t91" style="left:794.10px;top:1119.96px;font-size:16px;line-height:16px;font-weight:400;color:#323130;transform:scaleX(0.9519);">CPU Time</div>
<div class="t" id="t92" style="left:1347.80px;top:1119.96px;font-size:16px;line-height:16px;font-weight:400;color:#323130;transform:scaleX(0.9771);">14022.23 ms</div>
<div class="t" id="t93" style="left:766.80px;top:1160.76px;font-size:16px;line-height:16px;font-weight:400;color:#323130;transform:scaleX(1.0423);">Waiting</div>
<div class="t" id="t94" style="left:1356.00px;top:1160.76px;font-size:16px;line-height:16px;font-weight:400;color:#323130;transform:scaleX(0.9973);">6115.33 ms</div></body></html>
